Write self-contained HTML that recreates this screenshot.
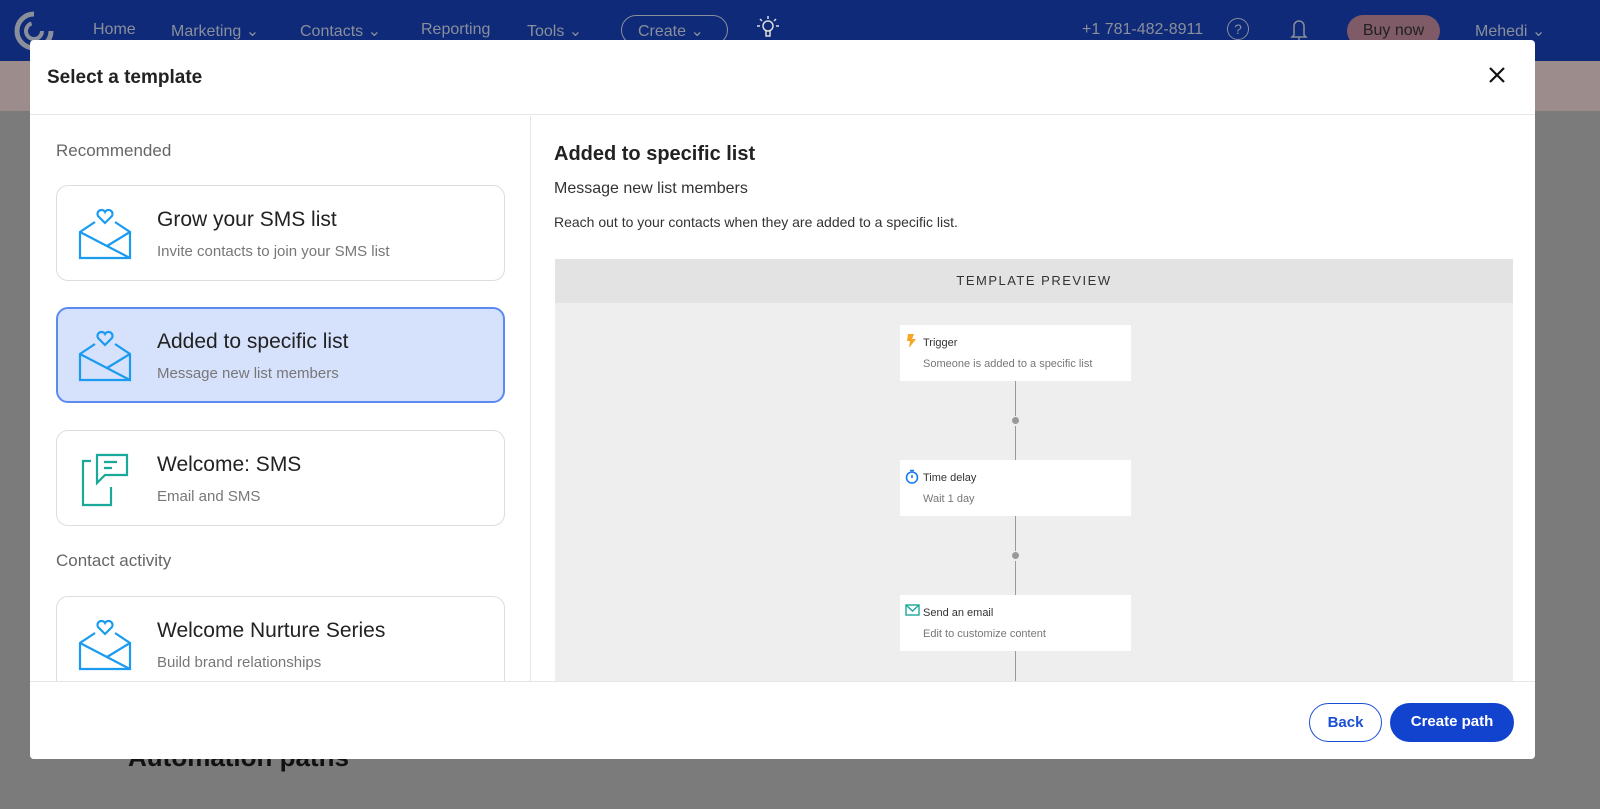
<!DOCTYPE html>
<html><head><meta charset="utf-8"><style>
*{box-sizing:border-box;margin:0;padding:0}
body{width:1600px;height:809px;overflow:hidden;font-family:"Liberation Sans",sans-serif;background:#7b7b7b;position:relative}
.nav{position:absolute;left:0;top:0;width:1600px;height:61px;background:#0e2a78}
.band{position:absolute;left:0;top:61px;width:1600px;height:50px;background:#9c8c8c}
.nav span{position:absolute;top:21px;color:#8a8f9c;font-size:16px}
.bg-title{position:absolute;left:128px;top:742px;font-size:26px;font-weight:bold;color:#111}
.modal{position:absolute;left:30px;top:40px;width:1505px;height:719px;background:#fff;border-radius:4px;overflow:hidden}
.hdr{height:75px;border-bottom:1px solid #e6e6e6;position:relative}
.hdr h1{position:absolute;left:17px;top:27px;font-size:19px;font-weight:bold;color:#222}
.x{position:absolute;left:1458px;top:26px}
.left{position:absolute;left:0;top:76px;width:501px;height:565px;border-right:1px solid #e6e6e6;overflow:hidden}
.sec{position:absolute;left:26px;font-size:17px;color:#666}
.card{position:absolute;left:26px;width:449px;height:96px;border:1px solid #ddd;border-radius:12px;background:#fff}
.card.sel{background:#d6e1fc;border:2px solid #5b8af0}
.card h3{position:absolute;left:100px;top:22px;font-size:21px;font-weight:normal;color:#222}
.card p{position:absolute;left:100px;top:57px;font-size:15px;color:#777}
.card svg{position:absolute;left:20px;top:22px}
.right{position:absolute;left:502px;top:76px;width:1003px;height:565px}
.right h2{position:absolute;left:22px;top:27px;font-size:20px;color:#222}
.right .s1{position:absolute;left:22px;top:64px;font-size:16px;color:#333}
.right .s2{position:absolute;left:22px;top:98px;font-size:14px;color:#333}
.prev{position:absolute;left:23px;top:143px;width:958px;height:430px;background:#eee}
.ph{height:44px;background:#e3e3e3;text-align:center;line-height:44px;font-size:13px;letter-spacing:1.5px;color:#333}
.node{position:absolute;left:345px;width:231px;height:56px;background:#fff}
.node b{position:absolute;left:23px;top:12px;font-size:11px;font-weight:normal;color:#333}
.node i{position:absolute;left:23px;top:33px;font-size:11px;font-style:normal;color:#777}
.node svg{position:absolute;left:5px;top:9px}
.line{position:absolute;left:460px;width:1px;background:#999}
.dot{position:absolute;left:457px;width:7px;height:7px;border-radius:50%;background:#999}
.ftr{position:absolute;left:0;top:641px;width:1505px;height:78px;border-top:1px solid #e6e6e6;background:#fff}
.btn{position:absolute;top:21px;height:39px;border-radius:20px;font-size:15px;font-weight:bold;text-align:center;line-height:37px}
</style></head><body>
<div class="nav">
<svg style="position:absolute;left:13px;top:10px" width="42" height="42" viewBox="0 0 42 42"><circle cx="21" cy="21" r="17" fill="none" stroke="#8a8f9c" stroke-width="5" stroke-dasharray="80 27"/><circle cx="21" cy="21" r="8" fill="none" stroke="#8a8f9c" stroke-width="4" stroke-dasharray="35 15"/></svg>
<span style="left:93px">Home</span><span style="left:171px">Marketing ⌄</span><span style="left:300px">Contacts ⌄</span><span style="left:421px">Reporting</span><span style="left:527px">Tools ⌄</span>
<div style="position:absolute;left:621px;top:15px;width:107px;height:30px;border:1.5px solid #8a8f9c;border-radius:16px"></div><span style="left:638px">Create ⌄</span>
<svg style="position:absolute;left:756px;top:14px" width="24" height="26" viewBox="0 0 24 26" fill="none" stroke="#ddd" stroke-width="1.5"><circle cx="12" cy="12" r="5"/><path d="M10 17v5h4v-5M12 2v3M4 5l2 2M20 5l-2 2M1 12h3M20 12h3"/></svg>
<span style="left:1082px">+1 781-482-8911</span>
<div style="position:absolute;left:1227px;top:18px;width:22px;height:22px;border:1.5px solid #8a8f9c;border-radius:50%;color:#8a8f9c;font-size:14px;text-align:center;line-height:20px">?</div>
<svg style="position:absolute;left:1290px;top:18px" width="18" height="24" viewBox="0 0 18 24" fill="none" stroke="#8a8f9c" stroke-width="1.5"><path d="M4 17V8a5 5 0 0 1 10 0v9l2 2H2z M9 19v4"/></svg>
<div style="position:absolute;left:1347px;top:15px;width:93px;height:32px;background:#7f5a67;border-radius:16px;color:#222;font-size:16px;text-align:center;line-height:32px">Buy now</div>
<span style="left:1475px">Mehedi ⌄</span>
</div>
<div class="band"></div>
<div class="bg-title">Automation paths</div>
<div class="modal">
<div class="hdr"><h1>Select a template</h1><svg class="x" width="18" height="18" viewBox="0 0 18 18" stroke="#111" stroke-width="2.2"><path d="M2 2L16 16M16 2L2 16"/></svg></div>
<div class="left">
<div class="sec" style="top:25px">Recommended</div>
<div class="card" style="top:69px"><svg width="56" height="52" viewBox="0 0 56 52" fill="none" stroke="#1a9bf0" stroke-width="2.2"><path d="M28 15 l-7-7 a4 4 0 0 1 7-4 a4 4 0 0 1 7 4z"/><path d="M18 14 L3 24 V50 H53 V24 L38 14"/><path d="M3 24 L53 50"/><path d="M53 24 L30 38"/></svg><h3>Grow your SMS list</h3><p>Invite contacts to join your SMS list</p></div>
<div class="card sel" style="top:191px"><svg style="left:19px;top:21px" width="56" height="52" viewBox="0 0 56 52" fill="none" stroke="#1a9bf0" stroke-width="2.2"><path d="M28 15 l-7-7 a4 4 0 0 1 7-4 a4 4 0 0 1 7 4z"/><path d="M18 14 L3 24 V50 H53 V24 L38 14"/><path d="M3 24 L53 50"/><path d="M53 24 L30 38"/></svg><h3 style="left:99px;top:21px">Added to specific list</h3><p style="left:99px;top:56px">Message new list members</p></div>
<div class="card" style="top:314px"><svg width="56" height="56" viewBox="0 0 56 56" fill="none" stroke="#1aa89a" stroke-width="2.2"><path d="M14 8 H6 V52 H34 V34"/><path d="M20 2 H50 V22 H28 L20 30z"/><path d="M27 9 H40 M27 15 H35"/></svg><h3>Welcome: SMS</h3><p>Email and SMS</p></div>
<div class="sec" style="top:435px">Contact activity</div>
<div class="card" style="top:480px"><svg width="56" height="52" viewBox="0 0 56 52" fill="none" stroke="#1a9bf0" stroke-width="2.2"><path d="M28 15 l-7-7 a4 4 0 0 1 7-4 a4 4 0 0 1 7 4z"/><path d="M18 14 L3 24 V50 H53 V24 L38 14"/><path d="M3 24 L53 50"/><path d="M53 24 L30 38"/></svg><h3>Welcome Nurture Series</h3><p>Build brand relationships</p></div>
</div>
<div class="right">
<h2>Added to specific list</h2>
<div class="s1">Message new list members</div>
<div class="s2">Reach out to your contacts when they are added to a specific list.</div>
<div class="prev"><div class="ph">TEMPLATE PREVIEW</div>
<div class="node" style="top:66px"><svg width="12" height="14" viewBox="0 0 12 14"><path d="M3 0 H9 L7 5 H11 L4 14 L5 7 H2z" fill="#f5a623"/></svg><b>Trigger</b><i>Someone is added to a specific list</i></div>
<div class="line" style="top:122px;height:35px"></div><div class="dot" style="top:158px"></div><div class="line" style="top:167px;height:34px"></div>
<div class="node" style="top:201px"><svg width="14" height="15" viewBox="0 0 14 15"><circle cx="7" cy="8.5" r="5.5" fill="none" stroke="#1a7bf0" stroke-width="1.6"/><path d="M5 1.5H9M7 6V9" stroke="#1a7bf0" stroke-width="1.6"/></svg><b>Time delay</b><i>Wait 1 day</i></div>
<div class="line" style="top:257px;height:35px"></div><div class="dot" style="top:293px"></div><div class="line" style="top:302px;height:34px"></div>
<div class="node" style="top:336px"><svg width="15" height="12" viewBox="0 0 15 12"><rect x="1" y="1" width="13" height="10" fill="none" stroke="#1aa89a" stroke-width="1.4"/><path d="M1 1 L7.5 7 L14 1" fill="none" stroke="#1aa89a" stroke-width="1.4"/></svg><b>Send an email</b><i>Edit to customize content</i></div>
<div class="line" style="top:392px;height:40px"></div>
</div>
</div>
<div class="ftr">
<div class="btn" style="left:1279px;width:73px;border:1px solid #1a4fd6;color:#1a4fd6;background:#fff">Back</div>
<div class="btn" style="left:1360px;width:124px;background:#1243cf;color:#fff">Create path</div>
</div>
</div>
</body></html>
